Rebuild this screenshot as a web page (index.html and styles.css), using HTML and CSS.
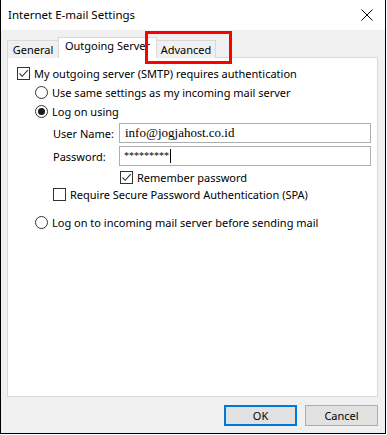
FILE: index.html
```html
<!DOCTYPE html>
<html>
<head>
<meta charset="utf-8">
<link rel="stylesheet" href="styles.css">
</head>
<body>
<div class="window">
  <div class="titlebar">
    <span class="title">Internet E-mail Settings</span>
    <svg class="close" width="12" height="12" viewBox="0 0 12 12"><path d="M0.5 0.5 L11.5 11.5 M11.5 0.5 L0.5 11.5" stroke="#000" stroke-width="1" fill="none"/></svg>
  </div>
  <div class="body">
    <div class="tabs">
      <div class="tab t-general">General</div>
      <div class="tab selected t-out">Outgoing Server</div>
      <div class="tab t-adv">Advanced</div>
      <div class="highlight"></div>
    </div>
    <div class="panel">
      <div class="row lvl0">
        <span class="check checked"><svg width="11" height="11" viewBox="0 0 11 11"><path d="M1.5 5.5 L4.2 8.3 L9.8 2.2" stroke="#333" stroke-width="1.1" fill="none"/></svg></span>
        <span>My outgoing server (SMTP) requires authentication</span>
      </div>
      <div class="row lvl1">
        <span class="radio"></span>
        <span>Use same settings as my incoming mail server</span>
      </div>
      <div class="row lvl1">
        <span class="radio on"></span>
        <span>Log on using</span>
      </div>
      <div class="fields">
        <div class="field">
          <span class="label">User Name:</span>
          <div class="input">info@jogjahost.co.id</div>
        </div>
        <div class="field">
          <span class="label">Password:</span>
          <div class="input pw">*********<span class="caret"></span></div>
        </div>
      </div>
      <div class="row remember">
        <span class="check checked"><svg width="11" height="11" viewBox="0 0 11 11"><path d="M1.5 5.5 L4.2 8.3 L9.8 2.2" stroke="#333" stroke-width="1.1" fill="none"/></svg></span>
        <span>Remember password</span>
      </div>
      <div class="row spa">
        <span class="check"></span>
        <span>Require Secure Password Authentication (SPA)</span>
      </div>
      <div class="row lvl1 last">
        <span class="radio"></span>
        <span>Log on to incoming mail server before sending mail</span>
      </div>
    </div>
    <div class="buttons">
      <button class="btn default">OK</button>
      <button class="btn">Cancel</button>
    </div>
  </div>
</div>
</body>
</html>
```

FILE: styles.css
```css
html, body {
  margin: 0;
  padding: 0;
  background: #fff;
}
body {
  font-family: "Noto Sans", "Open Sans", sans-serif;
  font-size: 11px;
  color: #000;
}
.window {
  width: 386px;
  height: 434px;
  box-sizing: border-box;
  border: 1px solid #000;
  border-top: none;
  display: flex;
  flex-direction: column;
  background: #f0f0f0;
}
.titlebar {
  height: 30px;
  background: #fff;
  display: flex;
  align-items: center;
  padding-left: 7px;
  padding-right: 12px;
  justify-content: space-between;
}
.title {
  font-size: 11.5px;
  line-height: 16px;
}
.close {
  display: block;
}
.body {
  flex: 1;
  display: flex;
  flex-direction: column;
  padding: 7px 7px 0 6px;
}
.tabs {
  position: relative;
  display: flex;
  align-items: flex-end;
  height: 21px;
  margin-bottom: -1px;
  z-index: 1;
}
.tab {
  height: 17px;
  line-height: 17px;
  box-sizing: content-box;
  border: 1px solid #d9d9d9;
  border-bottom: none;
  background: #f0f0f0;
  text-align: center;
  white-space: nowrap;
}
.t-general {
  width: 50px;
  border-right: none;
}
.t-out {
  width: 97px;
}
.t-adv {
  width: 58px;
  border-left: none;
}
.tab.selected {
  height: 20px;
  line-height: 16px;
  background: #fff;
  position: relative;
  z-index: 2;
}
.highlight {
  position: absolute;
  left: 138px;
  top: -6px;
  width: 81px;
  height: 27px;
  border: 3px solid #f00;
  z-index: 3;
}
.panel {
  height: 340px;
  box-sizing: border-box;
  border: 1px solid #d9d9d9;
  background: #fff;
  padding: 6px 0 0 9px;
  display: flex;
  flex-direction: column;
}
.row {
  display: flex;
  align-items: center;
  height: 19px;
  gap: 4px;
  white-space: nowrap;
}
.lvl1 {
  padding-left: 18px;
}
.check {
  width: 13px;
  height: 13px;
  box-sizing: border-box;
  border: 1px solid #333;
  background: #fff;
  display: flex;
  align-items: center;
  justify-content: center;
  flex: none;
}
.check svg {
  display: block;
}
.radio {
  width: 13px;
  height: 13px;
  box-sizing: border-box;
  border: 1px solid #333;
  border-radius: 50%;
  background: #fff;
  position: relative;
  flex: none;
}
.radio.on::after {
  content: "";
  position: absolute;
  left: 2px;
  top: 2px;
  width: 7px;
  height: 7px;
  border-radius: 50%;
  background: #1a1a1a;
}
.fields {
  display: flex;
  flex-direction: column;
  gap: 3px;
  padding-left: 36px;
  margin-top: 2px;
}
.field {
  display: flex;
  align-items: center;
  height: 20px;
  white-space: nowrap;
}
.label {
  width: 66px;
  flex: none;
}
.input {
  width: 252px;
  height: 20px;
  box-sizing: border-box;
  border: 1px solid #adadad;
  font-family: "Liberation Serif", serif;
  font-size: 13px;
  line-height: 18px;
  padding-left: 5px;
  display: flex;
  align-items: center;
}
.input.pw {
  font-size: 10px;
  padding-left: 4px;
}
.caret {
  display: inline-block;
  width: 1px;
  height: 14px;
  background: #000;
  margin-left: 1px;
}
.remember {
  padding-left: 103px;
  margin-top: 2px;
}
.spa {
  padding-left: 36px;
  margin-top: -2px;
}
.last {
  margin-top: 9px;
}
.buttons {
  display: flex;
  justify-content: flex-end;
  gap: 8px;
  margin-top: 8px;
}
.btn {
  width: 73px;
  height: 21px;
  box-sizing: border-box;
  border: 1px solid #adadad;
  background: #e1e1e1;
  font-family: "Noto Sans", "Open Sans", sans-serif;
  font-size: 11px;
  padding: 0;
  color: #000;
}
.btn.default {
  border: 2px solid #0078d7;
}
```
